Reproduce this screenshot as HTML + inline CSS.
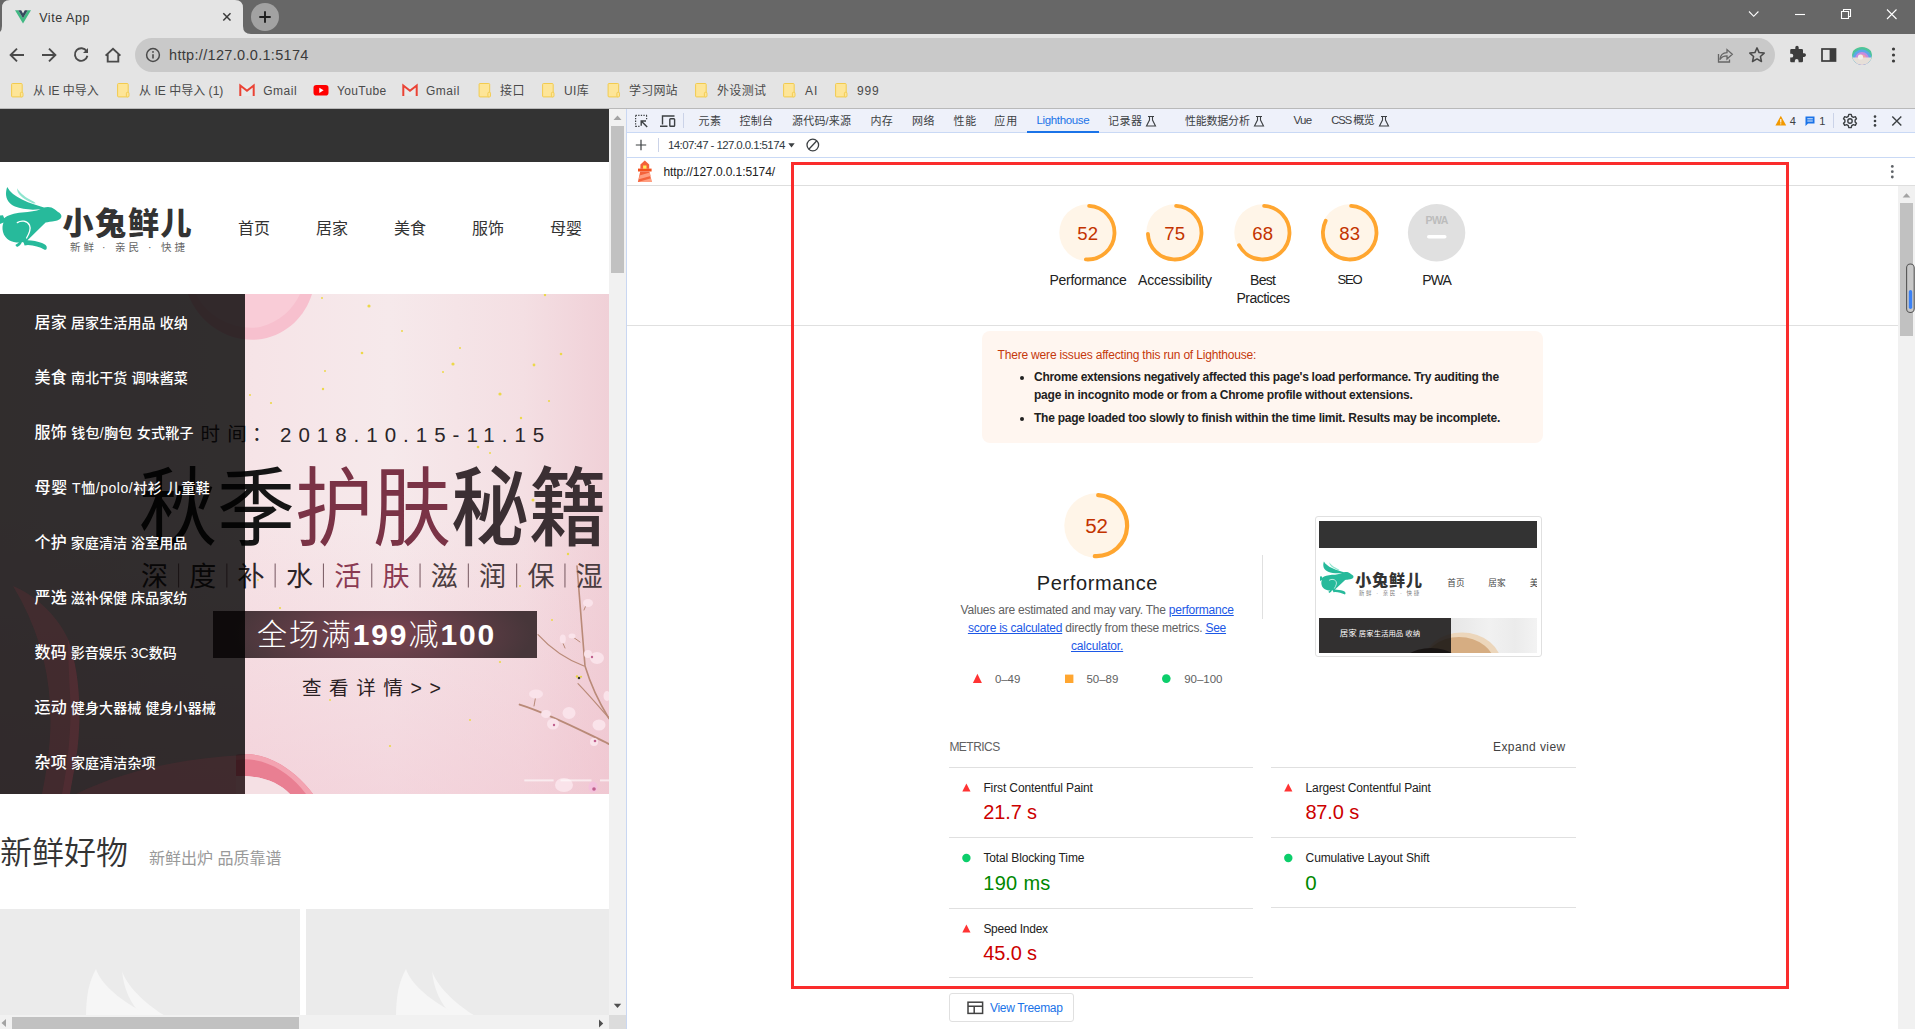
<!DOCTYPE html>
<html lang="zh-CN">
<head>
<meta charset="utf-8">
<title>Vite App</title>
<style>
*{box-sizing:border-box;margin:0;padding:0}
html,body{width:1915px;height:1029px;overflow:hidden;background:#fff}
body{font-family:"Liberation Sans","Noto Sans CJK SC",sans-serif;position:relative;color:#333}
.abs{position:absolute}
.t{position:absolute;white-space:nowrap;line-height:1}
svg{position:absolute;overflow:visible}
/* ===== browser chrome ===== */
#tabstrip{left:0;top:0;width:1915px;height:34px;background:#676767}
#tab{left:0;top:0}
#toolbar{left:0;top:34px;width:1915px;height:74px;background:#e4e4e4}
#omni{left:135px;top:38px;width:1640px;height:34px;border-radius:17px;background:#c9c9c9}
#chromeline{left:0;top:108px;width:1915px;height:1px;background:#b9b9b9}
.bm{font-size:12px;color:#4a4a4a;top:85px}
/* ===== page ===== */
#page{left:0;top:109px;width:609px;height:906px;background:#fff;overflow:hidden}
#topbar{left:0;top:0;width:609px;height:53px;background:#333}
.nav{font-size:16px;color:#333;top:112px}
#banner{left:0;top:185px;width:609px;height:500px;overflow:hidden;background:#f3dfe3}
#side{left:0;top:0;width:245px;height:500px;background:rgba(0,0,0,.8)}
.si{left:34.6px;color:#fff;font-size:14px;font-weight:500}
.si b{font-weight:500;font-size:16px}
/* ===== devtools ===== */
#dt{left:626px;top:109px;width:1289px;height:920px;background:#fff;overflow:hidden}
.dtt{font-size:12px;color:#333;top:6px}
</style>
</head>
<body>
<!-- CHROME-START -->
<div class="abs" id="tabstrip"></div>
<div class="abs" id="toolbar"></div>
<svg id="tab" class="abs" width="260" height="34" viewBox="0 0 260 34"><path d="M-6 34 Q2 34 2 26 L2 8 Q2 0 10 0 L235 0 Q243 0 243 8 L243 26 Q243 34 251 34 Z" fill="#e4e4e4"/>
<!-- vue icon -->
<path d="M15 10.3 L18.3 10.3 L23 18.2 L27.7 10.3 L31 10.3 L23 23.6 Z" fill="#41b883"/>
<path d="M18.3 10.3 L21.2 10.3 L23 13.4 L24.8 10.3 L27.7 10.3 L23 18.2 Z" fill="#35495e"/>
<path d="M223.3 13.3 L230.5 20.5 M230.5 13.3 L223.3 20.5" stroke="#3a3a3a" stroke-width="1.5" fill="none"/>
</svg>
<div class="t" style="letter-spacing:0.55px;left:39.2px;top:12.2px;font-size:12.5px;color:#333">Vite App</div>
<div class="abs" style="left:250.8px;top:2.8px;width:28px;height:28px;border-radius:14px;background:#a2a2a2"></div>
<svg style="left:250.8px;top:2.8px" width="28" height="28" viewBox="0 0 28 28"><path d="M14 8.3 V19.7 M8.3 14 H19.7" stroke="#1e1e1e" stroke-width="1.9" fill="none"/></svg>
<!-- window controls -->
<svg style="left:1740px;top:0" width="175" height="30" viewBox="0 0 175 30" fill="none" stroke="#fff" stroke-width="1.1">
<path d="M9 11.5 L13.7 16.3 L18.4 11.5"/>
<path d="M55 14.5 H65"/>
<path d="M101.5 11.5 h7 v7 h-7 z M103.5 11.3 V9.5 h7 v7 h-1.8"/>
<path d="M147 9.5 L156.5 19 M156.5 9.5 L147 19"/>
</svg>
<!-- nav buttons -->
<svg style="left:0;top:38px" width="135" height="34" viewBox="0 0 135 34" fill="none" stroke="#4a4a4a" stroke-width="1.9">
<path d="M24 17 H11 M17 10.6 L10.6 17 L17 23.4"/>
<path d="M42 17 H55 M49 10.6 L55.4 17 L49 23.4"/>
<path d="M86.6 13.2 A6.3 6.3 0 1 0 87.4 17.8"/>
<path d="M88 10 V15 H83 Z" fill="#4a4a4a" stroke="none"/>
<path d="M105.6 17.6 L113 10.8 L120.4 17.6 M107.7 16.2 V23.6 H118.3 V16.2"/>
</svg>
<div class="abs" id="omni"></div>
<svg style="left:144px;top:46px" width="18" height="18" viewBox="0 0 18 18"><circle cx="9" cy="9" r="6.4" fill="none" stroke="#4a4a4a" stroke-width="1.5"/><path d="M9 8.2 V12.4" stroke="#4a4a4a" stroke-width="1.6"/><circle cx="9" cy="5.9" r=".95" fill="#4a4a4a"/></svg>
<div class="t" style="letter-spacing:0.32px;left:169px;top:47.9px;font-size:14.5px;color:#3a3a3a">http://127.0.0.1:5174</div>
<!-- right toolbar icons -->
<svg style="left:1714px;top:44px" width="24" height="22" viewBox="0 0 24 22" fill="none" stroke="#666" stroke-width="1.3"><path d="M4.5 10 V18 H15.5 V15.5"/><path d="M5.8 15.6 C6.5 10.5 10 8.6 13 8.6 V5.6 L18.3 10.3 L13 15 V11.9 C10 11.9 7.6 12.8 5.8 15.6 Z"/></svg>
<svg style="left:1747px;top:45px" width="20" height="20" viewBox="0 0 20 20"><path d="M10 2.9 L12.1 7.6 L17.2 8.1 L13.4 11.5 L14.5 16.5 L10 13.9 L5.5 16.5 L6.6 11.5 L2.8 8.1 L7.9 7.6 Z" fill="none" stroke="#4a4a4a" stroke-width="1.5" stroke-linejoin="round"/></svg>
<svg style="left:1788px;top:46px" width="18" height="18" viewBox="0 0 18 18"><path d="M7.3 1.5 a1.7 1.7 0 0 1 3.4 0 V3 H13.8 a1.2 1.2 0 0 1 1.2 1.2 V7.3 H16.2 a1.8 1.8 0 0 1 0 3.6 H15 V15 a1.2 1.2 0 0 1 -1.2 1.2 H10.6 V15 a1.9 1.9 0 0 0 -3.8 0 V16.2 H3.4 A1.2 1.2 0 0 1 2.2 15 V11.6 H3.4 a1.9 1.9 0 0 0 0 -3.8 H2.2 V4.2 A1.2 1.2 0 0 1 3.4 3 H7.3 Z" fill="#3c3c3c"/></svg>
<svg style="left:1821px;top:48px" width="16" height="14" viewBox="0 0 16 14"><rect x="1" y="1" width="13.5" height="12" fill="none" stroke="#3c3c3c" stroke-width="1.7"/><rect x="8.6" y="1" width="5.9" height="12" fill="#3c3c3c"/></svg>
<div class="abs" style="left:1852px;top:45px;width:20px;height:20px;border-radius:10px;overflow:hidden;background:#e8e2dc">
<svg style="left:0;top:0" width="20" height="20" viewBox="0 0 20 20"><circle cx="10" cy="14" r="12" fill="#4dc49a"/><circle cx="10" cy="14" r="9.5" fill="#5aa7e8"/><circle cx="10" cy="14" r="7" fill="#c58be0"/><circle cx="10" cy="14" r="4.6" fill="#f0a0a8"/><rect x="0" y="12.5" width="20" height="8" fill="#e6dfd8"/><circle cx="8.5" cy="12" r="2.6" fill="#f2eee8"/></svg></div>
<svg style="left:1891px;top:46px" width="5" height="18" viewBox="0 0 5 18" fill="#3c3c3c"><circle cx="2.5" cy="3" r="1.6"/><circle cx="2.5" cy="9" r="1.6"/><circle cx="2.5" cy="15" r="1.6"/></svg>
<!-- bookmarks -->
<svg style="left:0;top:80px" width="900" height="22" viewBox="0 0 900 22">
<defs>
<g id="fld"><rect x=".6" y=".5" width="10.6" height="13.4" rx=".9" fill="#fde598" stroke="#f2cb4e" stroke-width="1"/><rect x="9.4" y="9.3" width="2.6" height="4.6" rx=".9" fill="#fde598" stroke="#f2cb4e" stroke-width=".9"/></g>
<g id="gm"><path d="M1 2 H15 V12.4 H1 Z" fill="#e9e9e9"/><path d="M1.3 12.4 V2 L8 7.3 L14.7 2 V12.4" fill="none" stroke="#ea4335" stroke-width="2" stroke-linejoin="miter"/></g>
</defs>
<use href="#fld" x="11" y="3"/><use href="#fld" x="117" y="3"/>
<use href="#gm" x="239" y="3.5"/>
<rect x="313.5" y="5" width="15" height="10.6" rx="2.8" fill="#f00"/><path d="M319.3 7.7 L323.6 10.3 L319.3 12.9 Z" fill="#fff"/>
<use href="#gm" x="402" y="3.5"/>
<use href="#fld" x="478.5" y="3"/><use href="#fld" x="542" y="3"/><use href="#fld" x="607.5" y="3"/><use href="#fld" x="695" y="3"/><use href="#fld" x="783" y="3"/><use href="#fld" x="835" y="3"/>
</svg>
<div class="t bm" style="letter-spacing:-0.03px;left:33px">从 IE 中导入</div>
<div class="t bm" style="letter-spacing:0.03px;left:139px">从 IE 中导入 (1)</div>
<div class="t bm" style="letter-spacing:0.52px;left:263.2px">Gmail</div>
<div class="t bm" style="letter-spacing:0.34px;left:337px">YouTube</div>
<div class="t bm" style="letter-spacing:0.51px;left:426px">Gmail</div>
<div class="t bm" style="letter-spacing:0.58px;left:500px">接口</div>
<div class="t bm" style="letter-spacing:0.39px;left:564px">UI库</div>
<div class="t bm" style="letter-spacing:0.19px;left:629px">学习网站</div>
<div class="t bm" style="letter-spacing:0.36px;left:717px">外设测试</div>
<div class="t bm" style="letter-spacing:0.96px;left:805px">AI</div>
<div class="t bm" style="letter-spacing:0.88px;left:857px">999</div>
<div class="abs" id="chromeline"></div>
<!-- CHROME-END -->
<!-- PAGE-START -->
<div class="abs" id="page">
<div class="abs" id="topbar"></div>
<!-- logo -->
<svg style="left:0;top:71px" width="64" height="76" viewBox="0 180 64 76">
<g id="rabbit"><path d="M17.2 188.2 C19 192 24 196 29 199 C32 200.8 34.5 202 35.8 203.3 L33.5 203.6 C28 201 21.5 198 18.6 193.5 C17.5 191.5 17 190 17.2 188.2 Z" fill="#8fe5cf"/>
<path d="M0 215.6 L3 215.3 L4.2 218.2 C8 214.8 14 213.2 22 212.4 C30 211.7 36 211 40.6 209.2 C32 210.2 22 209.6 15 206.6 C9 203.9 6 199 6 194 C6 191 6.5 189 7.2 186.9 C10 192 15 196 22 199.5 C30 203.5 38 205.5 44 207.6 C46 206.8 49 206.6 51.5 207.5 C54 208.5 56 210.5 58 212 C60 213 61.6 214.5 61.4 216.5 C61 219 58 220.5 55 221 C51 221.6 48 222 45.6 222.6 L27.5 240.3 C32 240.4 38 241.5 42 243 C45 244.1 47 245.6 46.8 248 C46.6 249.6 45.5 250.1 44.5 249.7 C40 247 34 245.6 28 245.1 L24.6 245.6 L23.6 242.6 L22 242.1 C21 244.6 19 246.6 17 247.1 L15.3 245 L19 242.6 C12 242.6 5 239.6 3 232 C2 228 2.5 225 3.5 222.4 L0 224 Z" fill="#27ba9b"/>
<path d="M17.3 222.6 C21 220.2 27.2 220.4 29.6 225.4 C31.2 229 29.2 233.4 26.6 238" fill="none" stroke="#fff" stroke-width="1.3" stroke-linecap="round"/>
</g></svg>
<div class="t" style="left:62.5px;top:98.5px;font-size:31px;font-weight:900;color:#333;letter-spacing:1.7px">小兔鲜儿</div>
<div class="t" style="left:70px;top:133px;font-size:10.5px;color:#666;letter-spacing:3px">新鲜</div>
<div class="t" style="left:102px;top:133px;font-size:10.5px;color:#666">·</div>
<div class="t" style="left:115px;top:133px;font-size:10.5px;color:#666;letter-spacing:3px">亲民</div>
<div class="t" style="left:148px;top:133px;font-size:10.5px;color:#666">·</div>
<div class="t" style="left:161px;top:133px;font-size:10.5px;color:#666;letter-spacing:3px">快捷</div>
<div class="t nav" style="left:238px">首页</div>
<div class="t nav" style="left:316px">居家</div>
<div class="t nav" style="left:394px">美食</div>
<div class="t nav" style="left:472px">服饰</div>
<div class="t nav" style="left:550px">母婴</div>
<!-- banner -->
<div class="abs" id="banner">
<div class="abs" style="left:0;top:0;width:609px;height:500px;background:linear-gradient(180deg,rgba(240,196,208,0) 0%,rgba(240,196,208,0) 45%,rgba(240,190,204,.45) 100%),linear-gradient(90deg,#f4dee2 0%,#f6e4e7 42%,#f6e9eb 64%,#f4dfe3 86%,#f0d0d7 100%)"></div>
<svg style="left:0;top:0" width="609" height="500" viewBox="0 0 609 500">
<!-- pink petal top-left -->
<path d="M188 0 L312 0 C305 22 288 40 262 45 C232 50 200 32 188 0 Z" fill="#f7c0ce"/>
<path d="M196 0 L300 0 C293 15 280 28 260 33 C234 37 206 22 196 0 Z" fill="#f9ccd7"/>
<!-- pink ribbon bottom -->
<path d="M236 461 C262 456 292 472 313 500 L290 500 C278 488 260 481 236 482 Z" fill="#e97f92"/>
<path d="M236 461 C262 456 292 472 313 500 L306 500 C288 476 262 462 236 466 Z" fill="#f3a3b1"/>
<path d="M236 482 C260 481 278 488 290 500 L236 500 Z" fill="#f5e0e4"/>
<!-- gold specks -->
<g fill="#ecd84a" transform="translate(0,-4)">
<circle cx="369" cy="16" r="1.6"/><circle cx="322" cy="8" r="1"/><circle cx="402" cy="41" r="1"/><circle cx="362" cy="63" r="1.3"/><circle cx="453" cy="74" r="1.6"/><circle cx="443" cy="82" r="1"/><circle cx="460" cy="58" r="1"/><circle cx="325" cy="81" r="1"/><circle cx="323" cy="99" r="1.2"/><circle cx="271" cy="113" r="1.1"/><circle cx="250" cy="105" r="1"/><circle cx="500" cy="104" r="1.6"/><circle cx="521" cy="128" r="1.2"/><circle cx="549" cy="111" r="1.1"/><circle cx="534" cy="75" r="1.4"/><circle cx="561" cy="64" r="1.3"/><circle cx="545" cy="5" r="1.2"/><circle cx="478" cy="157" r="1.3"/><circle cx="490" cy="163" r="1"/><circle cx="364" cy="203" r="1.3"/><circle cx="322" cy="220" r="1.3"/><circle cx="533" cy="210" r="1.5"/><circle cx="568" cy="264" r="1.2"/><circle cx="258" cy="290" r="1"/><circle cx="280" cy="318" r="1.1"/><circle cx="420" cy="330" r="1"/><circle cx="500" cy="372" r="1.1"/><circle cx="470" cy="430" r="1"/><circle cx="390" cy="456" r="1.1"/><circle cx="330" cy="410" r="1"/><circle cx="552" cy="330" r="1"/><circle cx="520" cy="296" r="1"/>
</g>
<!-- blossoms right -->
<g stroke="#b98a78" stroke-width="1.6" fill="none" stroke-linecap="round">
<path d="M577 272 C580 310 583 350 585 372 C592 395 600 410 609 424.6"/>
<path d="M538 340.6 C552 356 568 366 584 372" stroke-width="1.2"/>
<path d="M519.7 410.6 C550 420 580 436 609 450" stroke-width="2"/>
<path d="M578 389.6 C590 402 600 414 609 424" stroke-width="1.2"/>
<path d="M562 347 L565 354 M573 343 L580 348 M536 401 L534 412 M587 309 L584 316" stroke-width="1"/>
</g>
<g fill="#fae3ea">
<ellipse cx="588" cy="309" rx="5" ry="4"/><ellipse cx="562.8" cy="345" rx="3" ry="4.5"/><ellipse cx="572" cy="342" rx="3.5" ry="2.5"/><ellipse cx="597" cy="364" rx="7" ry="6"/><ellipse cx="588" cy="360" rx="4" ry="4"/><ellipse cx="536" cy="400" rx="7" ry="4.5"/><ellipse cx="569" cy="419" rx="6.5" ry="6"/><ellipse cx="553" cy="430" rx="6" ry="5.5"/><ellipse cx="546" cy="420" rx="5" ry="4"/><ellipse cx="599" cy="431" rx="6.5" ry="5.5"/><ellipse cx="594" cy="448" rx="4" ry="4"/><ellipse cx="607" cy="402" rx="3.5" ry="5"/><ellipse cx="564" cy="491" rx="9" ry="7"/><ellipse cx="593" cy="493" rx="4.5" ry="5.5" fill="#f3c1dc"/>
</g>
<g fill="#c0608e"><circle cx="594" cy="495" r="1.8"/><circle cx="554" cy="431" r="1.2"/><circle cx="592" cy="363" r="1.2"/><circle cx="595" cy="447" r="1.3"/></g>
<g fill="#3a3a2a"><circle cx="579" cy="384" r="1.3"/></g><g fill="#e8d23a"><circle cx="577" cy="382.5" r="1.2"/><circle cx="581" cy="382.8" r="1"/></g>
<!-- slide indicators -->
<g fill="#fff" opacity=".6"><rect x="524.3" y="485.4" width="29.3" height="2"/><rect x="560.5" y="485.4" width="31" height="2"/><rect x="600" y="485.4" width="9" height="2"/></g>
</svg>
<!-- banner texts -->
<div class="t" style="left:200.5px;top:131px;font-size:19.5px;color:#2a2528;letter-spacing:7.3px">时间<span style="margin-left:-2px">：</span></div>
<div class="t" style="left:280px;top:131px;font-size:20.5px;color:#2a2528;letter-spacing:7px">2018.10.15-11.15</div>
<div class="t" id="bt" style="left:138.5px;top:171.5px;font-size:86px;font-weight:400;letter-spacing:0;color:#3b2f33;transform-origin:0 0;transform:scaleX(.907)"><span style="color:#151515">秋季</span><span style="color:#7a3346">护肤</span><span style="font-weight:500">秘籍</span></div>
<div class="t" id="bs" style="left:141px;top:270px;font-size:27px;font-weight:400;letter-spacing:21.3px;color:#4a3c40"><span style="color:#2c2427">深度补水</span><span style="color:#8a3a52">活肤</span>滋润保湿</div>
<svg style="left:0;top:0" width="609" height="500" viewBox="0 0 609 500"><g fill="#80636b"><rect x="178" y="269.5" width="1.1" height="24"/><rect x="226.3" y="269.5" width="1.1" height="24"/><rect x="274.6" y="269.5" width="1.1" height="24"/><rect x="322.9" y="269.5" width="1.1" height="24"/><rect x="371.2" y="269.5" width="1.1" height="24"/><rect x="419.5" y="269.5" width="1.1" height="24"/><rect x="467.8" y="269.5" width="1.1" height="24"/><rect x="516.1" y="269.5" width="1.1" height="24"/><rect x="564.4" y="269.5" width="1.1" height="24"/></g></svg>
<div class="abs" style="left:213px;top:317px;width:324px;height:47px;background:radial-gradient(ellipse 150px 55px at 52% 50%,#7c4552 0%,#603d46 55%,#47363a 100%)"></div>
<div class="t" style="left:257px;top:326px;font-size:30px;font-weight:300;color:#fff;letter-spacing:1.9px">全场满<b style="font-weight:700">199</b>减<b style="font-weight:700">100</b></div>
<div class="t" style="left:302px;top:385px;font-size:19.5px;color:#2a2023;letter-spacing:7.6px">查看详情&gt;&gt;</div>
<!-- sidebar -->
<div class="abs" id="side"></div>
<svg style="left:0;top:0" width="245" height="500" viewBox="0 0 245 500"><path d="M13 292 C34 300 58 322 68 345 C78 372 82 410 78 450 C76 470 72 486 70 500 L42 500 C48 470 52 440 50 410 C48 370 36 330 13 292 Z" fill="rgba(170,45,62,.15)"/><path d="M68 345 C78 372 82 410 78 450 C76 470 72 486 70 500 L62 500 C68 470 72 430 70 400 C69 380 68 360 68 345 Z" fill="rgba(200,70,85,.1)"/><path d="M76 500 C120 478 180 464 245 461 L245 500 Z" fill="rgba(170,45,62,.13)"/></svg>
<div class="t si" style="letter-spacing:0.13px;top:21px"><b>居家</b> 居家生活用品 收纳</div>
<div class="t si" style="letter-spacing:0.13px;top:76px"><b>美食</b> 南北干货 调味酱菜</div>
<div class="t si" style="letter-spacing:0.27px;top:131px"><b>服饰</b> 钱包/胸包 女式靴子</div>
<div class="t si" style="letter-spacing:0.54px;top:186px"><b>母婴</b> T恤/polo/衬衫 儿童鞋</div>
<div class="t si" style="letter-spacing:0.09px;top:241px"><b>个护</b> 家庭清洁 浴室用品</div>
<div class="t si" style="letter-spacing:0.09px;top:296px"><b>严选</b> 滋补保健 床品家纺</div>
<div class="t si" style="letter-spacing:0.05px;top:351px"><b>数码</b> 影音娱乐 3C数码</div>
<div class="t si" style="letter-spacing:0.11px;top:406px"><b>运动</b> 健身大器械 健身小器械</div>
<div class="t si" style="letter-spacing:0.13px;top:461px"><b>杂项</b> 家庭清洁杂项</div>
</div>
<!-- fresh goods -->
<div class="t" style="left:0;top:728px;font-size:32px;font-weight:350;color:#333;letter-spacing:0">新鲜好物</div>
<div class="t" style="left:149px;top:742.3px;font-size:16px;color:#999;letter-spacing:0">新鲜出炉 品质靠谱</div>
<div class="abs" style="left:0;top:800px;width:300px;height:107px;background:#ebebeb"></div>
<div class="abs" style="left:306px;top:800px;width:303px;height:107px;background:#ebebeb"></div>
<svg style="left:0;top:800px" width="609" height="107" viewBox="0 0 609 107"><defs><g id="wm" fill="#f6f6f6"><path d="M10 60 C14 72 30 92 72 110 L0 110 C0 90 2 74 10 60 Z"/><path d="M36 62 C40 74 54 92 84 110 L60 110 C46 98 38 82 36 62 Z"/></g></defs><use href="#wm" x="86" y="0"/><use href="#wm" x="396" y="0"/></svg>
</div>
<!-- page scrollbars -->
<div class="abs" style="left:609px;top:109px;width:17px;height:906px;background:#f1f1f1"></div>
<div class="abs" style="left:611px;top:126px;width:13px;height:147px;background:#c1c1c1"></div>
<svg style="left:609px;top:109px" width="17" height="907" viewBox="0 0 17 907"><path d="M4.5 11 L8.5 6.5 L12.5 11 Z" fill="#a3a3a3"/><path d="M4.8 894.8 L8.5 899 L12.2 894.8 Z" fill="#505050"/></svg>
<div class="abs" style="left:0;top:1015px;width:626px;height:14px;background:#f1f1f1"></div>
<div class="abs" style="left:609px;top:1015px;width:17px;height:14px;background:#dcdcdc"></div>
<div class="abs" style="left:12px;top:1017px;width:287px;height:12px;background:#c1c1c1"></div>
<svg style="left:0;top:1016px" width="609" height="13" viewBox="0 0 609 13"><path d="M6 3 L1.5 7 L6 11 Z" fill="#a3a3a3"/><path d="M599 3.6 L603.2 7.5 L599 11.4 Z" fill="#505050"/></svg>
<!-- PAGE-END -->
<!-- DT-START -->
<div class="abs" id="dt"><div class="abs" style="left:-626px;top:-109px;width:1915px;height:1029px">
<div class="abs" style="left:626px;top:109px;width:1px;height:920px;background:#c9d7f2;"></div>
<div class="abs" style="left:627px;top:109px;width:1288px;height:23px;background:#eef1fa;"></div>
<div class="abs" style="left:627px;top:132px;width:1288px;height:1px;background:#c9d9f5;"></div>
<div class="abs" style="left:627px;top:157px;width:1288px;height:1px;background:#c9d9f5;"></div>
<div class="abs" style="left:627px;top:185px;width:1288px;height:1px;background:#dedede;"></div>
<svg style="left:627px;top:109px" width="70" height="23" viewBox="627 109 70 23" fill="none" stroke="#3c4043" stroke-width="1.2">
<path d="M635.6 115.4 H647 M635.6 115.4 V126.8 M635.6 126.4 H639.6 M646.6 115.4 V119.4" stroke-dasharray="1.3 1.3"/>
<path d="M641.2 121 L647.2 127 M641.2 125.8 V121 H646" stroke-width="1.4"/>
<path d="M662.5 124.5 V116 H674.5 M660 126.3 H667.5" stroke-width="1.4"/>
<rect x="669.8" y="118.8" width="4.8" height="7.4" rx=".8" stroke-width="1.4"/>
</svg>
<div class="abs" style="left:683px;top:113px;width:1px;height:15px;background:#cbd3e8;"></div>
<div class="t " style="letter-spacing:0.50px;left:698.5px;top:115.7px;font-size:11px;color:#3c4043;">元素</div>
<div class="t " style="letter-spacing:0.20px;left:739.5px;top:115.7px;font-size:11px;color:#3c4043;">控制台</div>
<div class="t " style="letter-spacing:0.19px;left:792px;top:115.7px;font-size:11px;color:#3c4043;">源代码/来源</div>
<div class="t " style="letter-spacing:0.21px;left:870.6px;top:115.7px;font-size:11px;color:#3c4043;">内存</div>
<div class="t " style="letter-spacing:0.60px;left:912px;top:115.7px;font-size:11px;color:#3c4043;">网络</div>
<div class="t " style="letter-spacing:0.80px;left:953.5px;top:115.7px;font-size:11px;color:#3c4043;">性能</div>
<div class="t " style="letter-spacing:1.00px;left:994.3px;top:115.7px;font-size:11px;color:#3c4043;">应用</div>
<div class="t " style="letter-spacing:-0.36px;left:1036.5px;top:115.4px;font-size:11.5px;color:#1a73e8;">Lighthouse</div>
<div class="abs" style="left:1027px;top:131px;width:72px;height:2px;background:#1a73e8;"></div>
<div class="t " style="letter-spacing:0.45px;left:1108px;top:115.7px;font-size:11px;color:#3c4043;">记录器</div>
<div class="t " style="letter-spacing:-0.22px;left:1185px;top:115.7px;font-size:11px;color:#3c4043;">性能数据分析</div>
<div class="t " style="letter-spacing:-0.67px;left:1293.5px;top:114.6px;font-size:11.5px;color:#3c4043;">Vue</div>
<div class="t " style="letter-spacing:-1.04px;left:1331.3px;top:114.8px;font-size:11.2px;color:#3c4043;">CSS 概览</div>
<svg style="left:627px;top:109px" width="1288" height="23" viewBox="627 109 1288 23"><path d="M1148 116.5 H1154 M1149.5 116.5 V120 L1146.5 126 H1155.5 L1152.5 120 V116.5" fill="none" stroke="#3c4043" stroke-width="1.1"/><path d="M1256 116.5 H1262 M1257.5 116.5 V120 L1254.5 126 H1263.5 L1260.5 120 V116.5" fill="none" stroke="#3c4043" stroke-width="1.1"/><path d="M1381 116.5 H1387 M1382.5 116.5 V120 L1379.5 126 H1388.5 L1385.5 120 V116.5" fill="none" stroke="#3c4043" stroke-width="1.1"/><path d="M1780.8 115.8 L1786.2 125.4 H1775.4 Z" fill="#f29900"/><path d="M1780.8 119 V122.4" stroke="#fff" stroke-width="1.1"/><circle cx="1780.8" cy="123.8" r=".6" fill="#fff"/><path d="M1805.5 116.5 H1814.5 V123.5 H1808 L1805.5 126 Z" fill="#1a73e8"/><path d="M1807.3 118.8 H1812.8 M1807.3 121 H1812.8" stroke="#fff" stroke-width=".9"/><rect x="1833" y="113" width="1" height="15" fill="#cbd3e8"/><g fill="none" stroke="#3c4043" stroke-width="1.4"><circle cx="1850" cy="121" r="2.2"/><path d="M1848.8 114.4 H1851.2 L1851.7 116.3 L1853.4 117.3 L1855.3 116.7 L1856.5 118.8 L1855.1 120.1 V121.9 L1856.5 123.2 L1855.3 125.3 L1853.4 124.7 L1851.7 125.7 L1851.2 127.6 H1848.8 L1848.3 125.7 L1846.6 124.7 L1844.7 125.3 L1843.5 123.2 L1844.9 121.9 V120.1 L1843.5 118.8 L1844.7 116.7 L1846.6 117.3 L1848.3 116.3 Z" stroke-linejoin="round"/></g><g fill="#3c4043"><circle cx="1875" cy="116.6" r="1.3"/><circle cx="1875" cy="121" r="1.3"/><circle cx="1875" cy="125.4" r="1.3"/></g><path d="M1892.3 116.5 L1901.3 125.5 M1901.3 116.5 L1892.3 125.5" stroke="#3c4043" stroke-width="1.4"/></svg>
<div class="t " style="left:1789.8px;top:115.5px;font-size:11px;color:#3c4043;">4</div>
<div class="t " style="left:1819.3px;top:116.1px;font-size:11px;color:#3c4043;">1</div>
<svg style="left:627px;top:133px" width="300" height="24" viewBox="627 133 300 24" fill="none" stroke="#3c4043">
<path d="M641 139.8 V150.2 M635.8 145 H646.2" stroke-width="1.2"/>
<rect x="658" y="138" width="1" height="14" fill="#cbd3e8" stroke="none"/>
<path d="M788.3 143.2 H794.7 L791.5 147.6 Z" fill="#3c4043" stroke="none"/>
<circle cx="812.8" cy="145" r="5.8" stroke-width="1.3"/><path d="M808.8 149.2 L816.8 140.8" stroke-width="1.3"/>
</svg>
<div class="t " style="letter-spacing:-0.60px;left:668px;top:139.8px;font-size:11.5px;color:#303942;">14:07:47 - 127.0.0.1:5174</div>
<svg style="left:627px;top:158px" width="40" height="28" viewBox="627 158 40 28">
<path d="M644.8 160.6 L649.2 164.5 V168.8 H640.4 V164.5 Z" fill="#f4623a"/>
<rect x="638" y="168.6" width="13.6" height="2.9" fill="#f4511e"/>
<path d="M640.2 171.4 H649.4 L651.7 181.9 H637.9 Z" fill="#f4623a"/>
<path d="M639.5 175.4 L649.9 172.6 L650.6 175.9 L638.8 179.2 Z" fill="#ff9e80"/>
<path d="M638.1 181.9 L651.1 178.3 L651.7 181.9 Z" fill="#ff9e80"/>
<rect x="643.1" y="165.5" width="3.4" height="3.1" fill="#ffee58"/>
</svg>
<div class="t " style="letter-spacing:-0.08px;left:663.4px;top:166.0px;font-size:12px;color:#212121;">http://127.0.0.1:5174/</div>
<svg style="left:1888px;top:162px" width="8" height="20" viewBox="0 0 8 20" fill="#5f6368"><circle cx="4.3" cy="4.4" r="1.4"/><circle cx="4.3" cy="9.7" r="1.4"/><circle cx="4.3" cy="15" r="1.4"/></svg>
<div class="abs" style="left:627px;top:325px;width:1271px;height:1px;background:#e0e0e0;"></div>
<svg style="left:1056.9px;top:202.1px" width="61.4" height="61.4" viewBox="-30.7 -30.7 61.4 61.4"><circle r="28.4" fill="#fff5e8"/><circle r="26.80" fill="none" stroke="#ffa630" stroke-width="3.8" stroke-linecap="round" stroke-dasharray="84.14 168.39" transform="rotate(-87)"/><text x="0" y="7.6" text-anchor="middle" font-size="18.6" fill="#c33300" font-family="Liberation Sans,sans-serif">52</text></svg>
<svg style="left:1143.9px;top:202.1px" width="61.4" height="61.4" viewBox="-30.7 -30.7 61.4 61.4"><circle r="28.4" fill="#fff5e8"/><circle r="26.80" fill="none" stroke="#ffa630" stroke-width="3.8" stroke-linecap="round" stroke-dasharray="122.87 168.39" transform="rotate(-87)"/><text x="0" y="7.6" text-anchor="middle" font-size="18.6" fill="#c33300" font-family="Liberation Sans,sans-serif">75</text></svg>
<svg style="left:1231.7px;top:202.1px" width="61.4" height="61.4" viewBox="-30.7 -30.7 61.4 61.4"><circle r="28.4" fill="#fff5e8"/><circle r="26.80" fill="none" stroke="#ffa630" stroke-width="3.8" stroke-linecap="round" stroke-dasharray="111.08 168.39" transform="rotate(-87)"/><text x="0" y="7.6" text-anchor="middle" font-size="18.6" fill="#c33300" font-family="Liberation Sans,sans-serif">68</text></svg>
<svg style="left:1318.7px;top:202.1px" width="61.4" height="61.4" viewBox="-30.7 -30.7 61.4 61.4"><circle r="28.4" fill="#fff5e8"/><circle r="26.80" fill="none" stroke="#ffa630" stroke-width="3.8" stroke-linecap="round" stroke-dasharray="136.34 168.39" transform="rotate(-87)"/><text x="0" y="7.6" text-anchor="middle" font-size="18.6" fill="#c33300" font-family="Liberation Sans,sans-serif">83</text></svg>
<svg style="left:1407px;top:203px" width="60" height="60" viewBox="0 0 60 60"><circle cx="29.6" cy="29.8" r="28.7" fill="#e0e0e0"/><text x="29.6" y="21" text-anchor="middle" font-size="10.5" font-weight="700" fill="#bcbcbc" font-family="Liberation Sans,sans-serif" letter-spacing="-.6">PWA</text><rect x="20" y="32" width="19.5" height="3.6" rx="1.8" fill="#fff"/></svg>
<div class="t" style="letter-spacing:-0.28px;left:1049.5px;top:273.0px;font-size:14px;color:#212121;">Performance</div>
<div class="t" style="letter-spacing:-0.19px;left:1138.1px;top:273.0px;font-size:14px;color:#212121;">Accessibility</div>
<div class="t" style="letter-spacing:-0.74px;left:1250.1px;top:273.0px;font-size:14px;color:#212121;">Best</div>
<div class="t" style="letter-spacing:-0.50px;left:1236.4px;top:291.0px;font-size:14px;color:#212121;">Practices</div>
<div class="t" style="letter-spacing:-1.23px;left:1337.5px;top:273.4px;font-size:13px;color:#212121;">SEO</div>
<div class="t" style="letter-spacing:-0.89px;left:1422.2px;top:273.0px;font-size:14px;color:#212121;">PWA</div>
<div class="abs" style="left:982px;top:330.5px;width:560.5px;height:112.5px;background:#fff6f0;border-radius:8px;"></div>
<div class="t " style="letter-spacing:-0.18px;left:997.5px;top:348.7px;font-size:12px;color:#c5380c;">There were issues affecting this run of Lighthouse:</div>
<div class="abs" style="left:1020px;top:375.5px;width:4px;height:4px;border-radius:2px;background:#212121"></div>
<div class="abs" style="left:1020px;top:416.5px;width:4px;height:4px;border-radius:2px;background:#212121"></div>
<div class="t " style="letter-spacing:-0.28px;left:1034px;top:371.1px;font-size:12px;color:#212121;font-weight:700;">Chrome extensions negatively affected this page's load performance. Try auditing the</div>
<div class="t " style="letter-spacing:-0.23px;left:1034px;top:389.1px;font-size:12px;color:#212121;font-weight:700;">page in incognito mode or from a Chrome profile without extensions.</div>
<div class="t " style="letter-spacing:-0.24px;left:1034px;top:412.1px;font-size:12px;color:#212121;font-weight:700;">The page loaded too slowly to finish within the time limit. Results may be incomplete.</div>
<svg style="left:1061.8px;top:490.6px" width="69.2" height="69.2" viewBox="-34.6 -34.6 69.2 69.2"><circle r="32.3" fill="#fff5e8"/><circle r="30.50" fill="none" stroke="#ffa630" stroke-width="4.2" stroke-linecap="round" stroke-dasharray="95.87 191.64" transform="rotate(-87)"/><text x="0" y="7.1" text-anchor="middle" font-size="20.5" fill="#c33300" font-family="Liberation Sans,sans-serif">52</text></svg>
<div class="t" style="letter-spacing:0.61px;left:1036.8px;top:573.0px;font-size:20px;color:#212121;">Performance</div>
<div class="t" style="letter-spacing:-0.22px;left:960.6px;top:603.9px;font-size:12px;color:#616161;">Values are estimated and may vary. The <span style="color:#1c58e6;text-decoration:underline;">performance</span></div>
<div class="t" style="letter-spacing:-0.23px;left:967.9px;top:621.9px;font-size:12px;color:#616161;"><span style="color:#1c58e6;text-decoration:underline;">score is calculated</span> directly from these metrics. <span style="color:#1c58e6;text-decoration:underline;">See</span></div>
<div class="t" style="letter-spacing:-0.17px;left:1071.0px;top:639.9px;font-size:12px;color:#616161;"><span style="color:#1c58e6;text-decoration:underline;">calculator.</span></div>
<svg style="left:960px;top:670px" width="280" height="18" viewBox="960 670 280 18"><path d="M977.4 673.8 L981.9 683 H972.9 Z" fill="#ff3333"/><rect x="1065" y="674.6" width="8.4" height="8.4" fill="#ffa630"/><circle cx="1166.3" cy="678.6" r="4.3" fill="#0cce6b"/></svg>
<div class="t " style="letter-spacing:-0.10px;left:995px;top:673.9px;font-size:11.5px;color:#616161;">0–49</div>
<div class="t " style="letter-spacing:-0.02px;left:1086.4px;top:673.9px;font-size:11.5px;color:#616161;">50–89</div>
<div class="t " style="letter-spacing:-0.01px;left:1184.2px;top:673.9px;font-size:11.5px;color:#616161;">90–100</div>
<div class="abs" style="left:1262px;top:555px;width:1px;height:64px;background:#e0e0e0;"></div>
<div class="abs" style="left:1315.3px;top:516.3px;width:226.4px;height:141px;background:#fff;border:1px solid #e0e0e0;border-radius:3px;"></div>
<div class="abs" id="thumb" style="left:1319.3px;top:520.6px;width:217.7px;height:132.8px;overflow:hidden;background:#fff"><div class="abs" style="left:0;top:0;width:218px;height:27.2px;background:#333"></div>
<svg style="left:.7px;top:40.4px" width="33.8" height="34" viewBox="0 186 62 65" preserveAspectRatio="none"><use href="#rabbit"/></svg>
<div class="t" style="left:36px;top:52.6px;font-size:16px;font-weight:900;color:#333;letter-spacing:.9px">小兔鲜儿</div>
<div class="t" style="left:39.5px;top:70.2px;font-size:5.5px;color:#777;letter-spacing:1.6px">新鲜 · 亲民 · 快捷</div>
<div class="t" style="left:128px;top:58.7px;font-size:8.6px;color:#444">首页</div>
<div class="t" style="left:169px;top:58.7px;font-size:8.6px;color:#444">居家</div>
<div class="t" style="left:210.5px;top:58.7px;font-size:8.6px;color:#444">美食</div>
<div class="abs" style="left:0;top:97.5px;width:218px;height:36px;background:linear-gradient(90deg,#e6e6e6 60%,#f1f1f1 78%,#ebebeb 90%,#f3f3f3 100%)"></div>
<svg style="left:0;top:97.5px" width="218" height="36" viewBox="0 0 218 36"><ellipse cx="143" cy="47" rx="39.5" ry="32.5" fill="#ecd6bb"/><ellipse cx="140" cy="49" rx="36.5" ry="30" fill="#d6ad82"/><ellipse cx="112" cy="54" rx="34" ry="24" fill="#3a2c24"/></svg>
<div class="abs" style="left:0;top:97.5px;width:131.3px;height:36px;background:rgba(20,18,18,.86)"></div>
<div class="t" style="left:20.5px;top:108.7px;font-size:7.4px;color:#fff"><span style="font-size:8.5px">居家</span> 居家生活用品 收纳</div>
</div>
<div class="t " style="letter-spacing:-0.52px;left:949.4px;top:740.7px;font-size:12px;color:#616161;">METRICS</div>
<div class="t " style="letter-spacing:0.41px;left:1493px;top:740.7px;font-size:12px;color:#424242;">Expand view</div>
<div class="abs" style="left:949px;top:767px;width:304px;height:1px;background:#e0e0e0;"></div>
<div class="abs" style="left:949px;top:837px;width:304px;height:1px;background:#e0e0e0;"></div>
<div class="abs" style="left:949px;top:908px;width:304px;height:1px;background:#e0e0e0;"></div>
<div class="abs" style="left:949px;top:977px;width:304px;height:1px;background:#e0e0e0;"></div>
<div class="abs" style="left:1271px;top:767px;width:305px;height:1px;background:#e0e0e0;"></div>
<div class="abs" style="left:1271px;top:837px;width:305px;height:1px;background:#e0e0e0;"></div>
<div class="abs" style="left:1271px;top:907px;width:305px;height:1px;background:#e0e0e0;"></div>
<svg style="left:940px;top:770px" width="400" height="200" viewBox="940 770 400 200"><path d="M966.4 783.4 L970.5 791.4 H962.3 Z" fill="#ff3333"/><path d="M1288.3 783.4 L1292.3999999999999 791.4 H1284.2 Z" fill="#ff3333"/><circle cx="966.4" cy="858" r="4.2" fill="#0cce6b"/><circle cx="1288.3" cy="858" r="4.2" fill="#0cce6b"/><path d="M966.4 924.4 L970.5 932.4 H962.3 Z" fill="#ff3333"/></svg>
<div class="t " style="letter-spacing:-0.12px;left:983.4px;top:781.7px;font-size:12px;color:#212121;">First Contentful Paint</div>
<div class="t " style="letter-spacing:-0.15px;left:1305.6px;top:781.7px;font-size:12px;color:#212121;">Largest Contentful Paint</div>
<div class="t " style="letter-spacing:-0.13px;left:983.4px;top:852.1px;font-size:12px;color:#212121;">Total Blocking Time</div>
<div class="t " style="letter-spacing:-0.13px;left:1305.6px;top:852.1px;font-size:12px;color:#212121;">Cumulative Layout Shift</div>
<div class="t " style="letter-spacing:-0.27px;left:983.4px;top:922.9px;font-size:12px;color:#212121;">Speed Index</div>
<div class="t " style="letter-spacing:-0.11px;left:983.2px;top:802.0px;font-size:20px;color:#cc0000;">21.7 s</div>
<div class="t " style="letter-spacing:-0.14px;left:1305.4px;top:802.0px;font-size:20px;color:#cc0000;">87.0 s</div>
<div class="t " style="letter-spacing:0.32px;left:983.2px;top:873.0px;font-size:20px;color:#008800;">190 ms</div>
<div class="t " style="left:1305.2px;top:872.7px;font-size:20.5px;color:#008800;">0</div>
<div class="t " style="letter-spacing:-0.11px;left:983.2px;top:943.0px;font-size:20px;color:#cc0000;">45.0 s</div>
<div class="abs" style="left:949px;top:993px;width:125px;height:29px;background:#fff;border:1px solid #e0e0e0;border-radius:3px;"></div>
<svg style="left:966px;top:1000px" width="20" height="16" viewBox="0 0 20 16" fill="none" stroke="#424242" stroke-width="1.5"><rect x="2" y="2.2" width="14.6" height="11.2"/><path d="M2 6.2 H16.6 M8.2 6.2 V13.4"/></svg>
<div class="t " style="letter-spacing:-0.33px;left:990px;top:1002.1px;font-size:12px;color:#1a73e8;">View Treemap</div>
<div class="abs" style="left:791px;top:162px;width:998px;height:827px;background:transparent;border:3px solid #fa2c2c;"></div>
<div class="abs" style="left:1898px;top:186px;width:17px;height:843px;background:#f1f1f1;"></div>
<div class="abs" style="left:1900px;top:203px;width:13px;height:133px;background:#c1c1c1;"></div>
<svg style="left:1898px;top:187px" width="17" height="160" viewBox="0 0 17 160"><path d="M4.6 10.5 L8.5 6.3 L12.4 10.5 Z" fill="#a3a3a3"/><rect x="8.6" y="77" width="7.6" height="48.5" rx="3.8" fill="#c8c8c8" stroke="#555" stroke-width="1.1"/><rect x="10.8" y="103" width="3.4" height="19" rx="1.7" fill="#3b82f6"/></svg>
</div></div>
<!-- DT-END -->
</body>
</html>
